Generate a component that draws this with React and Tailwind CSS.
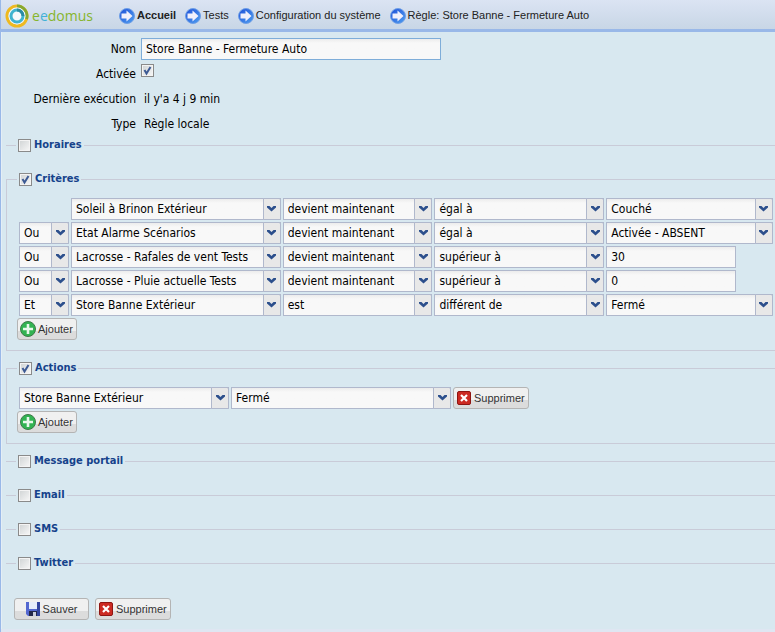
import React from 'react'

const ACTION_FIELDS = ['Store Banne Extérieur', 'Fermé']

const CRITERIA = [
  { link: null, device: 'Soleil à Brinon Extérieur', when: 'devient maintenant', op: 'égal à', value: 'Couché' },
  { link: 'Ou', device: 'Etat Alarme Scénarios', when: 'devient maintenant', op: 'égal à', value: 'Activée - ABSENT' },
  { link: 'Ou', device: 'Lacrosse - Rafales de vent Tests', when: 'devient maintenant', op: 'supérieur à', value: '30', free: true },
  { link: 'Ou', device: 'Lacrosse - Pluie actuelle Tests', when: 'devient maintenant', op: 'supérieur à', value: '0', free: true },
  { link: 'Et', device: 'Store Banne Extérieur', when: 'est', op: 'différent de', value: 'Fermé' },
]

const Logo = () => (
  <svg className="h-6 w-6 shrink-0" viewBox="0 0 24 24" fill="none">
    <circle cx="12" cy="12" r="10" stroke="#efb920" strokeWidth="3" />
    <path d="M12 2a10 10 0 0 1 9.5 13" stroke="#84a832" strokeWidth="3" />
    <circle cx="12" cy="12" r="8.5" fill="#f4f8fb" />
    <circle cx="12" cy="12" r="6" stroke="#3fb3cf" strokeWidth="3" />
    <path d="M12 6a6 6 0 0 1 6 6" stroke="#2b8ba3" strokeWidth="3" />
  </svg>
)

const ArrowIcon = () => (
  <svg className="h-4 w-4 shrink-0" viewBox="0 0 16 16">
    <defs>
      <linearGradient id="arrowDisc" x1="0" y1="0" x2="1" y2="1">
        <stop offset="0" stopColor="#1f4fd8" />
        <stop offset="1" stopColor="#4fa0f0" />
      </linearGradient>
    </defs>
    <circle cx="8" cy="8" r="7.5" fill="url(#arrowDisc)" stroke="#6f9fe6" />
    <path d="M2.500 5.500h5V2.500L13.500 8l-6 5.500v-3h-5z" fill="#f1f0fc" />
  </svg>
)

const AddIcon = () => (
  <svg className="h-4 w-4" viewBox="0 0 16 16">
    <circle cx="8" cy="8" r="7.5" fill="#32b352" stroke="#3d7a48" />
    <path d="M6.7 3h2.6v3.7H13v2.6H9.3V13H6.7V9.3H3V6.7h3.700z" fill="#e9f8ec" />
  </svg>
)

const DeleteIcon = () => (
  <svg className="h-4 w-4" viewBox="0 0 16 16">
    <rect x="1.5" y="1.5" width="13" height="13" rx="1.5" fill="#cc2a22" stroke="#8e1512" />
    <path d="M5 5l6 6M11 5l-6 6" stroke="#fff" strokeWidth="2.2" />
  </svg>
)

const SaveIcon = () => (
  <svg className="h-4 w-4" viewBox="0 0 16 16">
    <path d="M1 1h14v14H3l-2-2z" fill="#5468d0" />
    <path d="M12 1h3v14h-3z" fill="#3345a0" />
    <path d="M4 1h8v7H4z" fill="#e6edfb" />
    <path d="M4 10h8v5H4z" fill="#23284a" />
    <path d="M8 11h3v4H8z" fill="#c9cede" />
  </svg>
)

const Button = ({ icon, className = '', children }) => (
  <button
    type="button"
    className={`flex h-[22px] shrink-0 items-center justify-center gap-0.5 rounded-[3px] border border-[#b4b4b4] bg-linear-to-b from-[#f0f0f0] from-60% to-[#dcdcdc] to-60% px-0.5 font-['Liberation_Sans',sans-serif] text-[11px] text-[#333] ${className}`}
  >
    {icon}
    <span className="pr-px">{children}</span>
  </button>
)

const Select = ({ value, label, className = '' }) => (
  <div className={`relative h-[22px] min-w-0 ${className}`}>
    <select
      aria-label={label}
      defaultValue={value}
      className="h-full w-full appearance-none border border-[#b0b8cc] bg-[#f8f8f8] bg-linear-to-b from-[#ececec] to-[#f8f8f8] to-20% pr-5 pl-1 text-black outline-none"
    >
      <option>{value}</option>
    </select>
    <span className="pointer-events-none absolute inset-y-0 right-0 flex w-[18px] items-start justify-center rounded-tr-xs border border-[#b0b8cc] bg-[#e8e8e8] pt-1.5">
      <svg className="h-[7px] w-[9px]" viewBox="0 0 9 7">
        <path d="M0 1h2.500l2 2 2-2H9v1.500L4.500 6.500 0 2.500z" fill="#2c4f8c" />
      </svg>
    </span>
  </div>
)

const TickBox = (props) => (
  <span className="grid h-[13px] w-[13px] shrink-0">
    <input
      type="checkbox"
      className="peer col-start-1 row-start-1 h-[13px] w-[13px] appearance-none border border-[#8a8a8a] bg-linear-to-br from-[#cfd3d4] to-[#f8f8f8] shadow-[inset_0_0_0_1px_#f4f4f4]"
      {...props}
    />
    <svg className="pointer-events-none col-start-1 row-start-1 hidden h-[13px] w-[13px] peer-checked:block" viewBox="0 0 13 13">
      <path d="M3.500 6l2 3.500L9.500 3" fill="none" stroke="#3d5a94" strokeWidth="2" />
    </svg>
  </span>
)

const Section = ({ title, open = false, children }) => (
  <fieldset
    className={`min-w-0 border-t border-[#c9cbd8] ${open ? 'mb-[9px] border-b border-l pt-[11px] pb-2.5 pl-3' : 'mb-[18px] pl-3'}`}
  >
    <legend className="-ml-0.5 h-4 px-0.5">
      <label className="flex h-4 items-center gap-[3px] text-[11px] font-bold text-[#15428b]">
        <TickBox defaultChecked={open} />
        {title}
      </label>
    </legend>
    {children}
  </fieldset>
)

const Crumb = ({ bold = false, children }) => (
  <a href="#" className={`flex items-center gap-0.5 whitespace-nowrap ${bold ? 'font-bold' : ''}`}>
    <ArrowIcon />
    {children}
  </a>
)

const Row = ({ label, htmlFor, children }) => (
  <div className="flex h-6 items-center gap-[5px]">
    <label htmlFor={htmlFor} className="w-[130px] text-right">{label}</label>
    {children}
  </div>
)

const App = () => {
  return (
    <div className="flex min-h-screen flex-col overflow-x-hidden border-l border-[#99b8e8] bg-[#d8e8f0] font-['DejaVu_Sans_Condensed','DejaVu_Sans',sans-serif] text-[12px] text-black">
      <header className="flex h-8 items-center border-b-3 border-[#99b8e8] bg-linear-to-b from-[#dbe4f3] to-[#c8d6e6] pt-0.5 pl-1 font-['Liberation_Sans',sans-serif] text-[11px] text-[#222]">
        <Logo />
        <span className="ml-[3px] font-['Open_Sans',sans-serif] text-[14px] text-[#86b52c]">
          e<span className="text-[#41b2d6]">e</span>domus
        </span>
        <nav className="ml-[26px] flex gap-[9px]">
          <Crumb bold>Accueil</Crumb>
          <Crumb>Tests</Crumb>
          <Crumb>Configuration du système</Crumb>
          <Crumb>Règle: Store Banne - Fermeture Auto</Crumb>
        </nav>
      </header>

      <form className="flex flex-1 flex-col border-l border-[#e4eef6] pt-[5px] pl-1">
        <div className="flex flex-col gap-px pb-px">
          <Row label="Nom" htmlFor="nom">
            <input
              id="nom"
              autoFocus
              defaultValue="Store Banne - Fermeture Auto"
              className="h-[22px] w-[300px] border border-[#7eadd9] bg-[#f8f8f8] bg-linear-to-b from-[#ececec] to-[#f8f8f8] to-20% px-1 outline-none"
            />
          </Row>
          <Row label="Activée" htmlFor="activee">
            <span className="self-start pt-0.5">
              <TickBox id="activee" defaultChecked />
            </span>
          </Row>
          <Row label="Dernière exécution">
            <span className="pl-[3px]">il y'a 4 j 9 min</span>
          </Row>
          <Row label="Type">
            <span className="pl-[3px]">Règle locale</span>
          </Row>
        </div>

        <Section title="Horaires" />

        <Section title="Critères" open>
          <div className="flex flex-col gap-0.5 pr-0.5">
            {CRITERIA.map((c, i) => (
              <div key={i} className="grid grid-cols-[50px_210fr_150fr_170fr_167fr] gap-0.5">
                {c.link ? <Select label="Liaison" value={c.link} /> : <span />}
                <Select label="Périphérique" value={c.device} />
                <Select label="Condition" value={c.when} />
                <Select label="Comparaison" value={c.op} />
                {c.free ? (
                  <input
                    aria-label="Valeur"
                    defaultValue={c.value}
                    className="h-[22px] w-[130px] border border-[#b0b8cc] bg-[#f8f8f8] bg-linear-to-b from-[#ececec] to-[#f8f8f8] to-20% px-1 outline-none"
                  />
                ) : (
                  <Select label="Valeur" value={c.value} />
                )}
              </div>
            ))}
          </div>
          <div className="-ml-0.5 flex pt-0.5">
            <Button icon={<AddIcon />}>Ajouter</Button>
          </div>
        </Section>

        <Section title="Actions" open>
          <div className="flex gap-0.5">
            <Select label="Périphérique" value={ACTION_FIELDS[0]} className="w-[210px]" />
            <Select label="Valeur" value={ACTION_FIELDS[1]} className="w-[220px]" />
            <Button icon={<DeleteIcon />}>Supprimer</Button>
          </div>
          <div className="-ml-0.5 flex pt-0.5">
            <Button icon={<AddIcon />}>Ajouter</Button>
          </div>
        </Section>

        <Section title="Message portail" />
        <Section title="Email" />
        <Section title="SMS" />
        <Section title="Twitter" />

        <div className="flex gap-1.5 pt-[9px] pl-2">
          <Button icon={<SaveIcon />} className="w-[75px]">Sauver</Button>
          <Button icon={<DeleteIcon />}>Supprimer</Button>
        </div>
      </form>
      <footer className="h-[3px] bg-[#dfe6f2]" />
    </div>
  )
}

export default App
